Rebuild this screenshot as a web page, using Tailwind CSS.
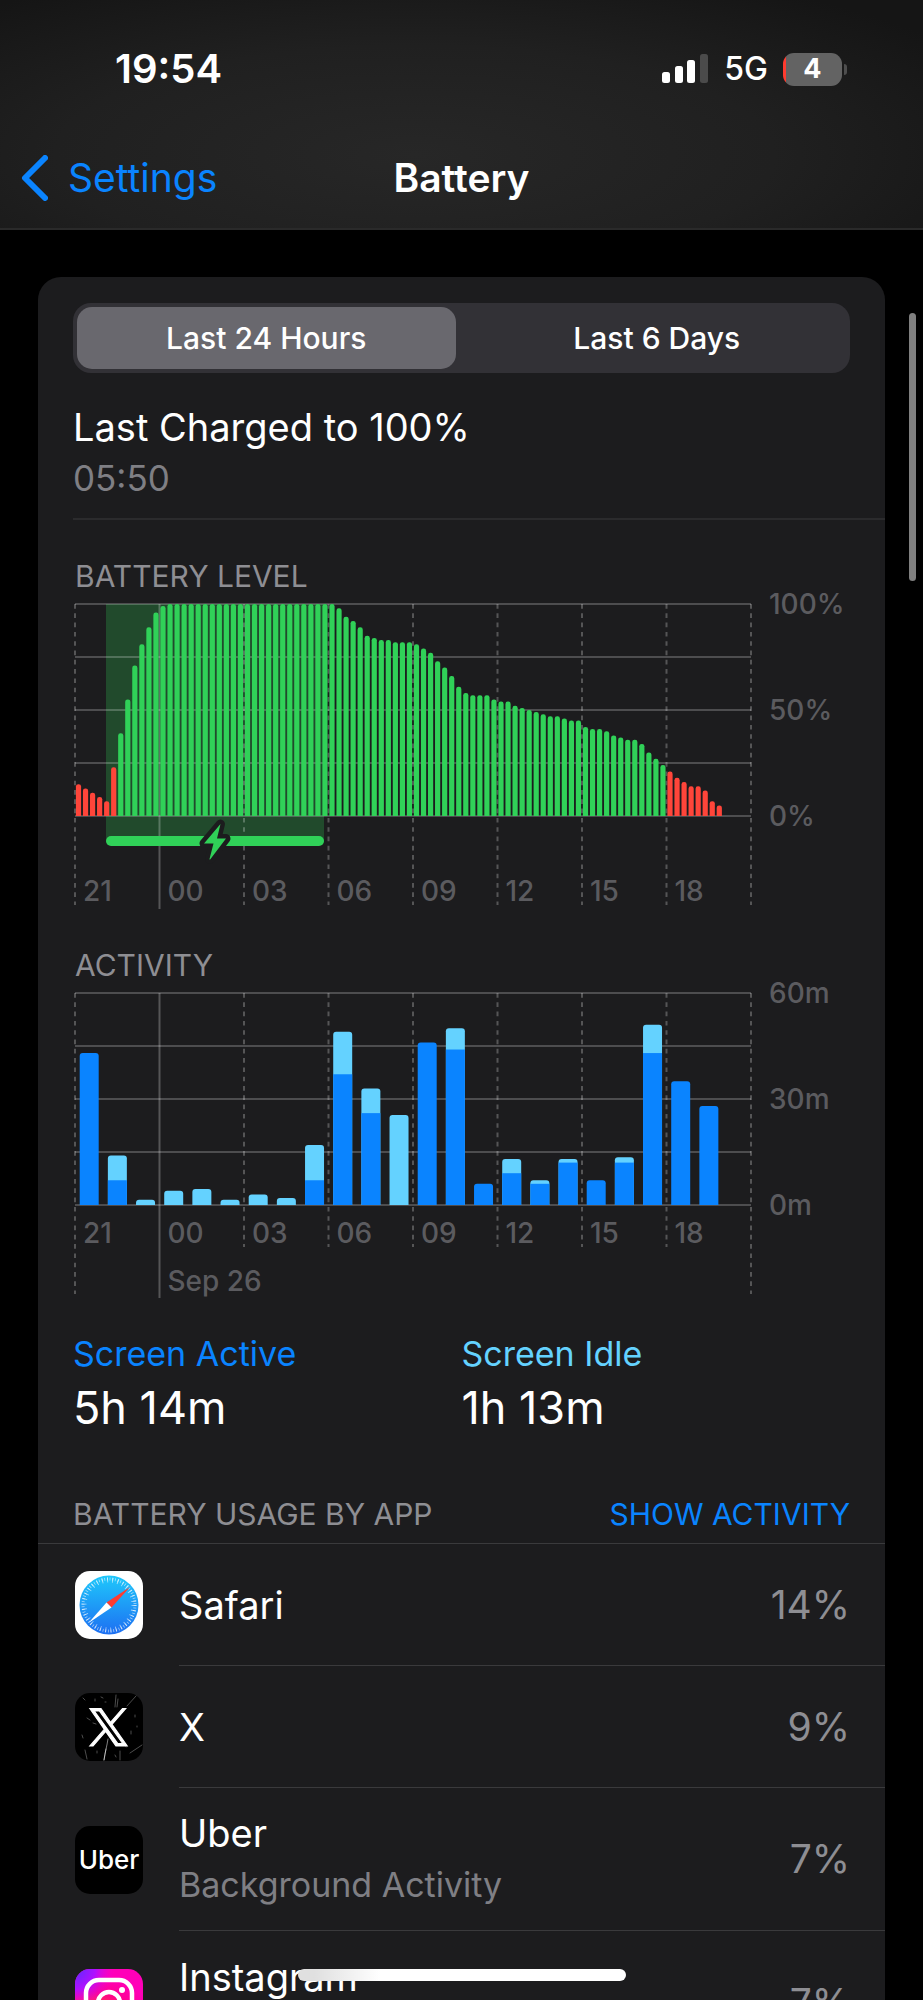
<!DOCTYPE html>
<html lang="en">
<head>
    <meta charset="UTF-8">
    <meta name="viewport" content="width=device-width, initial-scale=1.0">
    <title>Battery</title>
    <script src="https://cdn.jsdelivr.net/npm/@tailwindcss/browser@4"></script>
</head>
<body class="bg-black text-white font-['Inter',sans-serif] h-screen overflow-hidden">

<!-- Status bar + navigation -->
<header class="h-[230px] border-b-2 border-[#2a2a2a] bg-[radial-gradient(ellipse_at_45%_68%,#272727,#202020_50%,#151515_90%)] flex flex-col">
    <div class="h-[138px] pl-[115px] pr-[76px] flex items-center justify-between">
        <span class="text-[40px] leading-[48px] font-semibold">19:54</span>
        <div class="flex items-center gap-[15px]">
            <svg class="w-[47px] h-[30px]" viewBox="0 0 47 30" aria-hidden="true">
                <rect x="0" y="18" width="8" height="11" rx="2.500" fill="#fff"/>
                <rect x="13" y="12" width="8" height="17" rx="2.500" fill="#fff"/>
                <rect x="25" y="6" width="8" height="23" rx="2.500" fill="#fff"/>
                <rect x="38" y="0" width="8" height="29" rx="2.500" fill="#4b4b4b"/>
            </svg>
            <span class="text-[32px] leading-[48px] font-medium">5G</span>
            <div class="flex items-center gap-[2px]">
                <div class="w-[59px] h-[33px] rounded-[11px] bg-linear-to-r from-[#ff3b30] from-5% to-[#636363] to-5% flex items-center justify-center text-[27px] font-bold">4</div>
                <div class="w-[3px] h-[11px] rounded-r-full bg-[#4e4e4e]"></div>
            </div>
        </div>
    </div>
    <nav class="h-[80px] px-[21px] grid grid-cols-3 items-center">
        <a href="#" class="flex items-center gap-[20px] text-[#0a84ff] text-[39px] leading-[48px]">
            <svg class="w-[27px] h-[46px]" viewBox="0 0 27 46" fill="none" stroke="currentColor" stroke-width="6" stroke-linecap="round" stroke-linejoin="round" aria-hidden="true">
                <path d="M24 3 4 23l20 20"/>
            </svg>
            Settings
        </a>
        <h1 class="text-center text-[39px] leading-[48px] font-semibold">Battery</h1>
    </nav>
</header>

<main class="mx-[38px] mt-[47px] pt-[26px] rounded-t-[23px] bg-[#1c1c1e]">
    <div class="mx-[35px] h-[70px] p-1 rounded-[18px] bg-[#323136] grid grid-cols-2 gap-3 text-[30px] font-medium">
        <button type="button" class="rounded-[15px] bg-[#69686e]">Last 24 Hours</button>
        <button type="button">Last 6 Days</button>
    </div>

    <section class="ml-[35px] pt-[30px] pb-[16px] border-b-2 border-[#2b2b2d]">
        <h2 class="text-[38px] leading-[48px]">Last Charged to 100%</h2>
        <p class="mt-[3px] text-[35px] leading-[48px] text-[#7f7f84]">05:50</p>
    </section>

    <section class="mx-[35px] pt-[36px]">
        <h2 class="pl-[2px] text-[30px] leading-[40px] text-[#8e8e93]">BATTERY LEVEL</h2>
        <svg id="levelChart" class="mt-[3px] w-full overflow-visible" viewBox="0 0 777 320" font-size="28" font-weight="500" fill="#5b5b5f" role="img" aria-label="Battery level"></svg>
    </section>

    <section class="mx-[35px] pt-[26px]">
        <h2 class="pl-[2px] text-[30px] leading-[40px] text-[#8e8e93]">ACTIVITY</h2>
        <svg id="activityChart" class="mt-[3px] w-full overflow-visible" viewBox="0 0 777 320" font-size="28" font-weight="500" fill="#5b5b5f" role="img" aria-label="Activity"></svg>
    </section>

    <section class="mx-[35px] pt-[22px] grid grid-cols-2">
        <div>
            <h3 class="text-[34px] leading-[48px] text-[#0a84ff]">Screen Active</h3>
            <p class="mt-[2px] text-[45px] leading-[56px]">5h 14m</p>
        </div>
        <div>
            <h3 class="text-[34px] leading-[48px] text-[#64d2ff]">Screen Idle</h3>
            <p class="mt-[2px] text-[45px] leading-[56px]">1h 13m</p>
        </div>
    </section>

    <div class="mt-[58px] px-[35px] pb-[9px] border-b border-[#3a3a3c] flex items-center justify-between text-[30px] leading-[40px]">
        <h2 class="text-[#8e8e93]">BATTERY USAGE BY APP</h2>
        <button type="button" class="text-[#0a84ff]">SHOW ACTIVITY</button>
    </div>

    <ul class="pl-[37px]">
        <li class="flex items-center gap-[36px]">
            <svg class="w-[68px] h-[68px] shrink-0" viewBox="0 0 68 68" aria-hidden="true">
                <defs>
                    <linearGradient id="safari" x1="0" y1="0" x2="0" y2="1">
                        <stop offset="0" stop-color="#1fc8fb"/>
                        <stop offset="1" stop-color="#1d6ff2"/>
                    </linearGradient>
                </defs>
                <rect width="68" height="68" rx="15" fill="#fff"/>
                <circle cx="34" cy="34" r="29.500" fill="url(#safari)"/>
                <circle cx="34" cy="34" r="26" fill="none" stroke="#fff" stroke-opacity=".6" stroke-width="3" stroke-dasharray="0.8 1.92"/>
                <circle cx="34" cy="34" r="25" fill="none" stroke="#fff" stroke-opacity=".6" stroke-width="5" stroke-dasharray="0.9 4.336"/>
                <path d="M55 16 31.500 31.500 36.500 36.500z" fill="#ff3b30"/>
                <path d="M13.500 52 31.500 31.500 36.500 36.500z" fill="#fff"/>
            </svg>
            <div class="flex-1 h-[122px] pr-[35px] border-b border-[#3a3a3c] flex items-center justify-between text-[38px] leading-[48px]">
                <span>Safari</span>
                <span class="text-[39px] text-[#8e8e93]">14%</span>
            </div>
        </li>
        <li class="flex items-center gap-[36px]">
            <svg class="w-[68px] h-[68px] shrink-0" viewBox="0 0 68 68" aria-hidden="true">
                <rect width="68" height="68" rx="15" fill="#000"/>
                <g fill="none" stroke="#fff" stroke-linecap="round">
                    <path d="M33 46c-1 7-3 13-4 21M31 56l-2 11" stroke-opacity=".5"/>
                    <path d="M41 2l-1 12M43 6l-1 8M52 13l9-10M55 60l12-8M45 58v9M10 57l2 9" stroke-opacity=".3"/>
                    <path d="M8 5l2 2M20 6v2M26 4l2 1M12 25l3 2M56 38v3M50 52l1 2M18 30l3 1M30 9h1M60 22v2M7 42l1 3M62 33v1M40 62l1 2M22 58v2" stroke-opacity=".3"/>
                </g>
                <g transform="translate(14 15.500) scale(1.62 1.560)">
                    <path d="M14.200 10.200 22.700 0h-2l-7.400 8.800L7.400 0H.5l8.900 13.300L.5 24h2l7.800-9.300L16.600 24h7L14.200 10.200zM3.300 1.600h3.100l14.500 20.900h-3.100L3.300 1.600z" fill="#fff" stroke="#fff" stroke-width=".7"/>
                </g>
            </svg>
            <div class="flex-1 h-[122px] pr-[35px] border-b border-[#3a3a3c] flex items-center justify-between text-[38px] leading-[48px]">
                <span>X</span>
                <span class="text-[39px] text-[#8e8e93]">9%</span>
            </div>
        </li>
        <li class="flex items-center gap-[36px]">
            <div class="w-[68px] h-[68px] shrink-0 rounded-[15px] bg-black flex items-center justify-center text-[26px] font-medium" aria-hidden="true">Uber</div>
            <div class="flex-1 h-[143px] pr-[35px] border-b border-[#3a3a3c] flex items-center justify-between text-[38px] leading-[48px]">
                <div>
                    <p>Uber</p>
                    <p class="mt-1 text-[34px] text-[#7f7f84]">Background Activity</p>
                </div>
                <span class="text-[39px] text-[#8e8e93]">7%</span>
            </div>
        </li>
        <li class="flex items-center gap-[36px]">
            <svg class="w-[68px] h-[68px] shrink-0" viewBox="0 0 68 68" aria-hidden="true">
                <defs>
                    <radialGradient id="instaWarm" cx=".27" cy="1.08" r="1">
                        <stop offset="0" stop-color="#ffd600"/>
                        <stop offset=".4" stop-color="#ff5a1f"/>
                        <stop offset=".75" stop-color="#ff0090"/>
                        <stop offset="1" stop-color="#ff00b8"/>
                    </radialGradient>
                    <radialGradient id="instaCool" cx="0" cy="0" r=".6">
                        <stop offset="0" stop-color="#5b2bff"/>
                        <stop offset=".5" stop-color="#b010ff"/>
                        <stop offset="1" stop-color="#ff00c8" stop-opacity="0"/>
                    </radialGradient>
                </defs>
                <rect width="68" height="68" rx="15" fill="url(#instaWarm)"/>
                <rect width="68" height="68" rx="15" fill="url(#instaCool)"/>
                <g fill="none" stroke="#fff" stroke-width="4.500">
                    <rect x="11" y="11" width="46" height="46" rx="13"/>
                    <circle cx="34" cy="34" r="11"/>
                </g>
                <circle cx="47" cy="21" r="3" fill="#fff"/>
            </svg>
            <div class="flex-1 h-[143px] pr-[35px] flex items-center justify-between text-[38px] leading-[48px]">
                <div>
                    <p>Instagram</p>
                    <p class="mt-1 text-[34px] text-[#7f7f84]">Background Activity</p>
                </div>
                <span class="text-[39px] text-[#8e8e93]">7%</span>
            </div>
        </li>
    </ul>
</main>

<!-- Scroll indicator and home indicator float over the page -->
<div class="fixed right-[7px] top-[313px] w-[7px] h-[268px] rounded-full bg-[#808080]"></div>
<div class="fixed bottom-[19px] left-1/2 -translate-x-1/2 w-[328px] h-[12px] rounded-full bg-linear-to-r from-[#e0e0e0] from-5% to-white to-25%"></div>

<script>
    const X0 = 2, WIDTH = 676, TOP = 5, HEIGHT = 212;
    const BASE = TOP + HEIGHT;
    const hours = ['21', '00', '03', '06', '09', '12', '15', '18'];

    const levels = [15, 13, 11, 9, 7, 23, 39, 55, 71, 81, 89, 96, 99,
        ...Array(24).fill(100),
        98, 94, 92, 89, 85, 84, 83, 83, 82, 82, 82,
        81, 79, 77, 73, 70, 66, 61, 58, 57, 57, 57,
        55, 54, 54, 52, 51, 50, 49, 48, 47, 47, 46, 45, 45,
        42, 41, 41, 40, 38, 37, 36, 36, 34, 30, 27, 24,
        21, 18, 16, 14, 14, 12, 7, 5];

    // [screen active, screen idle] minutes per hour
    const activity = [[43, 0], [7, 7], [0, 1.5], [0, 4], [0, 4.5], [0, 1.5], [0, 3], [0, 2],
        [7, 10], [37, 12], [26, 7], [0, 25.5], [46, 0], [44, 6], [6, 0], [9, 4], [6, 1],
        [12, 1], [7, 0], [12, 1.5], [43, 8], [35, 0], [28, 0]];

    // Column with rounded top corners
    function column(x, y, w, h, r, fill) {
        r = Math.min(r, h);
        return `<path d="M${x} ${y + h}v${r - h}q0 ${-r} ${r} ${-r}h${w - 2 * r}q${r} 0 ${r} ${r}v${h - r}z" fill="${fill}"/>`;
    }

    function grid(yLabels, labelY, tickEnd, edgeEnd) {
        let out = '';
        for (let i = 0; i <= 4; i++) {
            const y = TOP + i * HEIGHT / 4;
            out += `<path d="M${X0} ${y}h${WIDTH}" stroke="#fff" stroke-opacity=".22" stroke-width="2"/>`;
        }
        for (let i = 0; i <= 8; i++) {
            const x = X0 + i * WIDTH / 8;
            const solid = i === 1;
            const end = solid ? edgeEnd + 4 : (i === 0 || i === 8) ? edgeEnd : tickEnd;
            out += `<path d="M${x} ${TOP}V${end}" stroke="#fff" stroke-opacity=".25" stroke-width="2" ${solid ? '' : 'stroke-dasharray="4.65 4.65"'}/>`;
            if (i < 8) out += `<text x="${x + 8}" y="${labelY}">${hours[i]}</text>`;
        }
        yLabels.forEach((label, i) => {
            out += `<text x="696" y="${TOP + 10 + i * HEIGHT / 2}">${label}</text>`;
        });
        return out;
    }

    let level = `<path d="M33 ${TOP}h218v238H33z" fill="#214a2c"/>`;
    level += grid(['100%', '50%', '0%'], 302, 306, 306);
    levels.forEach((v, i) => {
        const h = v / 100 * HEIGHT;
        level += column(X0 + 0.9 + i * WIDTH / 96, BASE - h, 5.2, h, 2.4, v <= 23 ? '#ff453a' : '#30d158');
    });
    level += '<rect x="33" y="237" width="218" height="10" rx="5" fill="#30d158"/>';
    // Charging bolt, outlined in the card colour so it cuts through the bar
    level += '<path d="M147.500 225 131 244.500h9.500l-4 15.500q0 1 1 0L153 239.500h-9z" fill="#30d158" stroke="#1c1c1e" stroke-width="9" stroke-linejoin="round" paint-order="stroke"/>';
    document.getElementById('levelChart').innerHTML = level;

    let bars = grid(['60m', '30m', '0m'], 255, 259, 306);
    activity.forEach(([active, idle], i) => {
        const x = X0 + 4.7 + i * WIDTH / 24;
        const total = (active + idle) / 60 * HEIGHT;
        const h = active / 60 * HEIGHT;
        bars += column(x, BASE - total, 19, total, 3, idle ? '#64d2ff' : '#0a84ff');
        if (idle && active) bars += `<rect x="${x}" y="${BASE - h}" width="19" height="${h}" fill="#0a84ff"/>`;
    });
    bars += `<text x="${X0 + WIDTH / 8 + 8}" y="303">Sep 26</text>`;
    document.getElementById('activityChart').innerHTML = bars;
</script>
</body>
</html>
